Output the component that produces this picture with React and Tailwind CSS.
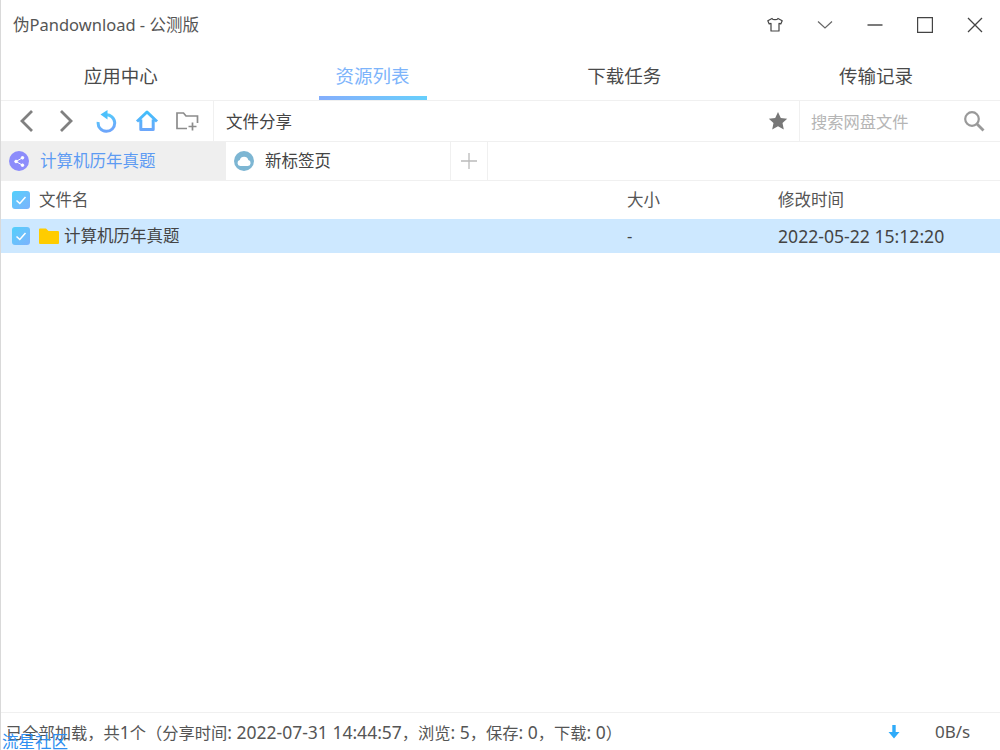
const FONT = "font-['Noto_Sans','Noto_Sans_CJK_SC',sans-serif]";

function Check() {
  return (
    <span className="flex h-[18px] w-[18px] shrink-0 items-center justify-center rounded-[3px] bg-gradient-to-br from-[#4fd0fb] to-[#7cb2fd]">
      <svg width="12" height="12" viewBox="0 0 12 12" fill="none" stroke="#fff" strokeWidth="1.5"><path d="M1.5 6.5 4.8 9.5 10.5 3" /></svg>
    </span>
  );
}

function TopTab({ label, active }) {
  return (
    <div className="flex h-full w-[251.7px] shrink-0 flex-col items-center">
      <div className={`flex h-[47px] items-center pt-[5px] text-[18.5px] ${active ? "text-[#7db4fb]" : "text-[#4a4a4a]"}`}>{label}</div>
      {active ? <div className="mt-auto h-[4px] w-[108px] bg-gradient-to-r from-[#84aefc] to-[#66cffc]" /> : null}
    </div>
  );
}

function S({ children }) {
  return <span className="text-[17.5px]">{children}</span>;
}

export default function App() {
  return (
    <div className={`relative flex h-[750px] w-[1000px] flex-col overflow-hidden border-l border-[#d9d9d9] bg-white text-[#444] ${FONT}`}>
      {/* title bar */}
      <div className="flex h-[50px] shrink-0 items-center pl-[12px] pr-[15px]">
        <span className="text-[16.5px] text-[#555]">伪Pandownload - 公测版</span>
        <div className="ml-auto flex items-center gap-[30px] text-[#555]">
          <svg width="20" height="20" viewBox="0 0 20 20" fill="none" stroke="#444" strokeWidth="1.2" strokeLinejoin="round"><path d="M7 3.500 2.800 5.800 4.200 9l1.800-.6V16h8V8.400l1.800.6 1.400-3.200L13 3.500c-.8 1.600-5.200 1.600-6 0Z" /></svg>
          <svg width="20" height="20" viewBox="0 0 20 20" fill="none" stroke="#666" strokeWidth="1.200"><path d="M3 6.500 10 13l7-6.500" /></svg>
          <svg width="20" height="20" viewBox="0 0 20 20" fill="none" stroke="#333" strokeWidth="1.300"><path d="M2.500 10h15" /></svg>
          <svg width="20" height="20" viewBox="0 0 20 20" fill="none" stroke="#444" strokeWidth="1.200"><path d="M2.600 2.600h14.800v14.800H2.600z" /></svg>
          <svg width="20" height="20" viewBox="0 0 20 20" fill="none" stroke="#444" strokeWidth="1.300"><path d="m3 3 14 14M17 3 3 17" /></svg>
        </div>
      </div>

      {/* main tabs */}
      <div className="flex h-[51px] shrink-0 border-b border-[#f0f0f0]">
        <div className="ml-[-6px] flex h-full">
          <TopTab label="应用中心" />
          <TopTab label="资源列表" active />
          <TopTab label="下载任务" />
          <TopTab label="传输记录" />
        </div>
      </div>

      {/* toolbar */}
      <div className="flex h-[41px] shrink-0 items-center border-b border-[#f0f0f0]">
        <div className="flex h-full w-[213px] shrink-0 items-center border-r border-[#f0f0f0] pl-[17px]">
          <svg className="mr-[21px]" width="18" height="24" viewBox="0 0 18 24" fill="none" stroke="#808080" strokeWidth="2.800"><path d="M14 2 4 12l10 10" /></svg>
          <svg className="mr-[20px]" width="18" height="24" viewBox="0 0 18 24" fill="none" stroke="#808080" strokeWidth="2.800"><path d="m4 2 10 10L4 22" /></svg>
          <svg className="mr-[16px]" width="24" height="24" viewBox="0 0 24 24" fill="none" strokeWidth="3">
            <defs>
              <linearGradient id="g1" x1="0" y1="0" x2="0.3" y2="1"><stop offset="0" stopColor="#4fd0fb" /><stop offset="1" stopColor="#6da6fb" /></linearGradient>
            </defs>
            <path stroke="url(#g1)" d="M10.500 5.800a8.300 8.300 0 1 1-7.300 7.200" />
            <path fill="#4cc0fb" d="M12.500 1v9.500L5.500 5.500Z" />
          </svg>
          <svg className="mr-[16px]" width="24" height="24" viewBox="0 0 24 24" fill="none" strokeWidth="3" stroke="url(#g2)" strokeLinejoin="round">
            <defs>
              <linearGradient id="g2" gradientUnits="userSpaceOnUse" x1="12" y1="2" x2="12" y2="22"><stop offset="0" stopColor="#3fc0fb" /><stop offset="1" stopColor="#6da6fb" /></linearGradient>
            </defs>
            <path d="M2 12.500 12 3l10 9.500M5.800 10.500V20.500h12.400V10.500" />
          </svg>
          <svg width="24" height="24" viewBox="0 0 24 24" fill="none" stroke="#8c8c8c" strokeWidth="1.700"><path d="M12 19.500H2V4h6.500l2.500 3h11.500v7M17.500 13.500v8M13.500 17.500h8" /></svg>
        </div>
        <div className="pl-[12px] pt-[2px] text-[16.5px] text-[#444]">文件分享</div>
        <div className="ml-auto flex h-full w-[32px] items-center justify-start border-r border-[#f0f0f0]">
          <svg width="20" height="20" viewBox="0 0 20 20" fill="#777"><path d="m10 1 2.800 6 6.400.7-4.700 4.400 1.300 6.400L10 15.300 4.200 18.500l1.300-6.400L.8 7.700 7.200 7Z" /></svg>
        </div>
        <div className="flex h-full w-[200px] items-center justify-between pl-[11px] pr-[15px]">
          <span className="pt-[2px] text-[16.25px] text-[#b5b5b5]">搜索网盘文件</span>
          <svg width="22" height="22" viewBox="0 0 22 22" fill="none" stroke="#999" strokeWidth="2.200"><circle cx="9" cy="9" r="6.800" /><path d="m14 14 6.500 6.500" strokeWidth="2.800" /></svg>
        </div>
      </div>

      {/* doc tabs */}
      <div className="flex h-[39px] shrink-0 items-stretch border-b border-[#f0f0f0]">
        <div className="flex w-[225px] items-center gap-[11px] bg-[#efefef] pl-[8px] text-[16.5px] text-[#5d9bf3]">
          <span className="flex h-[20px] w-[20px] items-center justify-center rounded-full bg-[#8c8cfb]">
            <svg width="13" height="13" viewBox="0 0 13 13" fill="#fff" stroke="#fff"><circle cx="9.500" cy="2.800" r="1.300" /><circle cx="9.500" cy="10.200" r="1.300" /><circle cx="3" cy="6.500" r="1.300" /><path d="M9.500 2.800 3 6.500l6.500 3.700" fill="none" /></svg>
          </span>
          计算机历年真题
        </div>
        <div className="flex w-[225px] items-center gap-[11px] border-r border-[#f0f0f0] pl-[8px] text-[16.5px] text-[#444]">
          <svg width="20" height="20" viewBox="0 0 20 20">
            <circle cx="10" cy="10" r="10" fill="#7db6d3" />
            <path fill="#fff" d="M6.300 15a3 3 0 0 1-.5-5.900 4.400 4.400 0 0 1 8.500 0 3 3 0 0 1-.4 5.900Z" />
          </svg>
          新标签页
        </div>
        <div className="flex w-[37px] items-center justify-center border-r border-[#f0f0f0]">
          <svg width="18" height="18" viewBox="0 0 18 18" fill="none" stroke="#bbb" strokeWidth="1.300"><path d="M9 1v16M1 9h16" /></svg>
        </div>
      </div>

      {/* table header */}
      <div className="flex h-[38px] shrink-0 items-center text-[16.5px] text-[#555]">
        <div className="flex w-[626px] items-center gap-[9px] pl-[11px]"><Check />文件名</div>
        <div className="w-[151px]">大小</div>
        <div>修改时间</div>
      </div>

      {/* row */}
      <div className="flex h-[34px] shrink-0 items-center bg-[#cde8ff] text-[16.5px] text-[#444]">
        <div className="flex w-[626px] items-center pl-[11px]">
          <Check />
          <svg className="ml-[9px] mr-[5px]" width="20" height="16" viewBox="0 0 20 16"><path fill="#ffcc00" d="M0 1.500A1 1 0 0 1 1 .5h6l2.500 2.500H19a1 1 0 0 1 1 1V15a1 1 0 0 1-1 1H1a1 1 0 0 1-1-1Z" /></svg>
          计算机历年真题
        </div>
        <div className="w-[151px]">-</div>
        <div className="text-[17.6px]">2022-05-22 15:12:20</div>
      </div>

      <div className="flex-1" />

      {/* status bar */}
      <div className="flex h-[38px] shrink-0 items-center border-t border-[#f0f0f0] pl-[5px] pt-[1px] text-[16.25px] text-[#555]">
        <span>已全部加载，共<S>1</S>个（分享时间<S>: 2022-07-31 14:44:57</S>，浏览<S>: 5</S>，保存<S>: 0</S>，下载<S>: 0</S>）</span>
        <svg className="ml-auto" width="12" height="14" viewBox="0 0 12 14" fill="#2fabf9"><path d="M4.300 0h3.400v7H11.500L6 13.500.5 7h3.800Z" /></svg>
        <span className="ml-[35px] w-[65px] text-[17px] text-[#555]">0B/s</span>
      </div>

      <div className="absolute bottom-[-2px] left-[1px] text-[16.5px] leading-[20px] text-[#2f8ff0]">流星社区</div>
    </div>
  );
}
